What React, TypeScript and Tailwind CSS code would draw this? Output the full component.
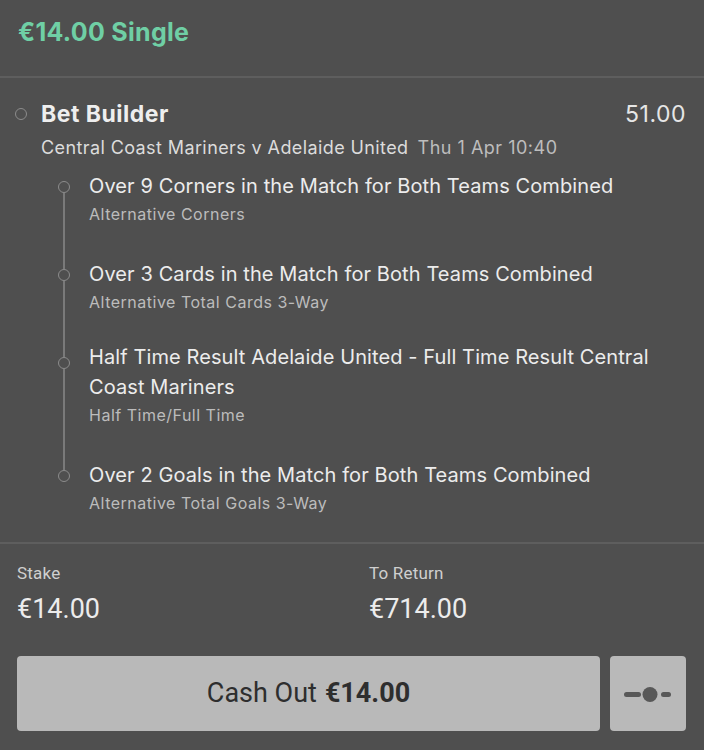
import { Fragment } from "react";

type Leg = { title: string; market: string };

const legs: Leg[] = [
  { title: "Over 9 Corners in the Match for Both Teams Combined", market: "Alternative Corners" },
  { title: "Over 3 Cards in the Match for Both Teams Combined", market: "Alternative Total Cards 3-Way" },
  {
    title: "Half Time Result Adelaide United - Full Time Result Central Coast Mariners",
    market: "Half Time/Full Time",
  },
  { title: "Over 2 Goals in the Match for Both Teams Combined", market: "Alternative Total Goals 3-Way" },
];

function SliderIcon() {
  return (
    <svg width="50" height="20" viewBox="0 0 50 20" fill="none">
      <rect x="1" y="8" width="17" height="5" rx="2.5" fill="#585858" />
      <circle cx="27" cy="10.5" r="7.5" fill="#585858" />
      <rect x="38" y="8" width="10" height="5" rx="2.5" fill="#585858" />
    </svg>
  );
}

export default function App() {
  return (
    <div className="w-[704px] h-[750px] bg-[#4f4f4f] overflow-hidden" style={{ fontFamily: "Inter, 'Noto Sans', sans-serif" }}>
      {/* header */}
      <div className="h-[78px] px-[18px] pt-[16px] border-b-2 border-[#5e5e5e]">
        <div className="text-[25px] leading-[32px] font-bold tracking-[0.3px] text-[#6fcfa5]">€14.00 Single</div>
      </div>

      {/* selection */}
      <div className="pt-[21px] pr-[18px] border-b-2 border-[#5e5e5e] h-[466px]">
        <div className="flex items-center">
          <div className="w-[41px] flex justify-center">
            <span className="block w-[12px] h-[12px] rounded-full border-[1.5px] border-[#8c8c8c]" />
          </div>
          <div className="flex-1 text-[23px] leading-[30px] font-bold tracking-[0.5px] text-[#eeeeee]">Bet Builder</div>
          <div className="text-[23px] leading-[30px] tracking-[0.5px] text-[#e6e6e6]">51.00</div>
        </div>
        <div className="pl-[41px] mt-[7px] leading-[24px] text-[18px]">
          <span className="tracking-[0.4px] text-[#dcdcdc]">Central Coast Mariners v Adelaide United</span>
          <span className="tracking-[0.5px] text-[#bdbdbd] ml-[9px]">Thu 1 Apr 10:40</span>
        </div>

        <div className="mt-[11px] pl-[58px]">
          {legs.map((leg, i) => (
            <Fragment key={i}>
              <div className="flex">
                <div className="w-[12px] flex flex-col items-center">
                  <div className={`w-[2px] h-[10px] ${i === 0 ? "" : "bg-[#7a7a7a]"}`} />
                  <span className="block w-[12px] h-[12px] rounded-full border-[1.5px] border-[#8c8c8c] shrink-0" />
                  <div className={`w-[2px] flex-1 ${i === legs.length - 1 ? "" : "bg-[#7a7a7a]"}`} />
                </div>
                <div className={`ml-[19px] flex-1 ${i === legs.length - 1 ? "" : "pb-[32px]"}`}>
                  <div className={`text-[20px] leading-[30px] tracking-[0.1px] text-[#ececec] ${i === 2 ? "-mt-[5px]" : ""}`}>
                    {leg.title}
                  </div>
                  <div className="text-[16px] leading-[26px] tracking-[0.5px] text-[#bcbcbc]">{leg.market}</div>
                </div>
              </div>
            </Fragment>
          ))}
        </div>
      </div>

      {/* stake / return */}
      <div className="px-[17px] pt-[17px]" style={{ fontFamily: "Roboto, 'Noto Sans', sans-serif" }}>
        <div className="grid grid-cols-2">
          <div>
            <div className="text-[17px] leading-[24px] tracking-[0.2px] text-[#cfcfcf]">Stake</div>
            <div className="mt-[8px] text-[27px] leading-[32px] text-[#ececec]">€14.00</div>
          </div>
          <div className="pl-[17px]">
            <div className="text-[17px] leading-[24px] tracking-[0.2px] text-[#cfcfcf]">To Return</div>
            <div className="mt-[8px] text-[27px] leading-[32px] text-[#ececec]">€714.00</div>
          </div>
        </div>

        <div className="mt-[31px] flex gap-[10px] pr-[1px]">
          <button className="flex-1 h-[75px] rounded-[4px] bg-[#b9b9b9] flex items-center justify-center gap-[8px] text-[#2e2e2e]">
            <span className="text-[27px]">Cash Out</span>
            <span className="text-[27px] font-bold">€14.00</span>
          </button>
          <button className="w-[76px] h-[75px] rounded-[4px] bg-[#b9b9b9] flex items-center justify-center">
            <SliderIcon />
          </button>
        </div>
      </div>
    </div>
  );
}
